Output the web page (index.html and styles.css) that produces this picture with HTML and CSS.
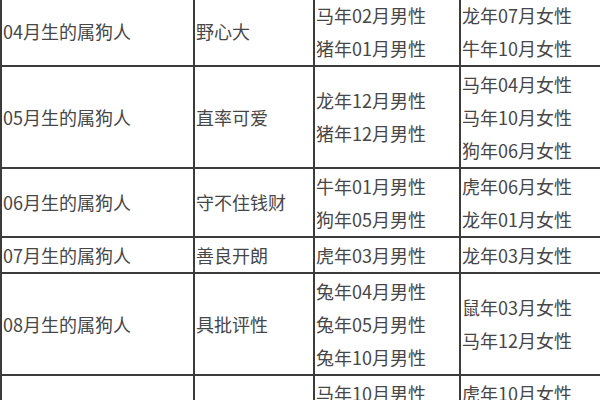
FILE: index.html
```html
<!DOCTYPE html>
<html lang="zh">
<head>
<meta charset="utf-8">
<link rel="stylesheet" href="styles.css">
</head>
<body>
<table class="match">
  <colgroup>
    <col class="c1"><col class="c2"><col class="c3"><col class="c4">
  </colgroup>
  <tbody>
    <tr>
      <td>04月生的属狗人</td>
      <td>野心大</td>
      <td>马年02月男性<br>猪年01月男性</td>
      <td>龙年07月女性<br>牛年10月女性</td>
    </tr>
    <tr>
      <td>05月生的属狗人</td>
      <td>直率可爱</td>
      <td>龙年12月男性<br>猪年12月男性</td>
      <td>马年04月女性<br>马年10月女性<br>狗年06月女性</td>
    </tr>
    <tr>
      <td>06月生的属狗人</td>
      <td>守不住钱财</td>
      <td>牛年01月男性<br>狗年05月男性</td>
      <td>虎年06月女性<br>龙年01月女性</td>
    </tr>
    <tr>
      <td>07月生的属狗人</td>
      <td>善良开朗</td>
      <td>虎年03月男性</td>
      <td>龙年03月女性</td>
    </tr>
    <tr>
      <td>08月生的属狗人</td>
      <td>具批评性</td>
      <td>兔年04月男性<br>兔年05月男性<br>兔年10月男性</td>
      <td>鼠年03月女性<br>马年12月女性</td>
    </tr>
    <tr>
      <td>09月生的属狗人</td>
      <td>固执好强</td>
      <td>马年10月男性<br>猪年07月男性</td>
      <td>虎年10月女性<br>龙年05月女性</td>
    </tr>
  </tbody>
</table>
</body>
</html>
```

FILE: styles.css
```css
html, body {
  margin: 0;
  padding: 0;
  background: #ffffff;
  overflow: hidden;
}

body {
  width: 600px;
  height: 400px;
}

.match {
  border-collapse: collapse;
  table-layout: fixed;
  width: 760px;
  margin-top: -4px;
  font-family: "Noto Sans CJK SC", "Microsoft YaHei", sans-serif;
  font-size: 18px;
  line-height: 33px;
  color: #474747;
}

.c1 { width: 193px; }
.c2 { width: 120px; }
.c3 { width: 146px; }
.c4 { width: 301px; }

.match td {
  border: 2px solid #3c3c3c;
  padding: 0.5px 1px;
  vertical-align: middle;
  text-align: left;
  white-space: nowrap;
}
```
